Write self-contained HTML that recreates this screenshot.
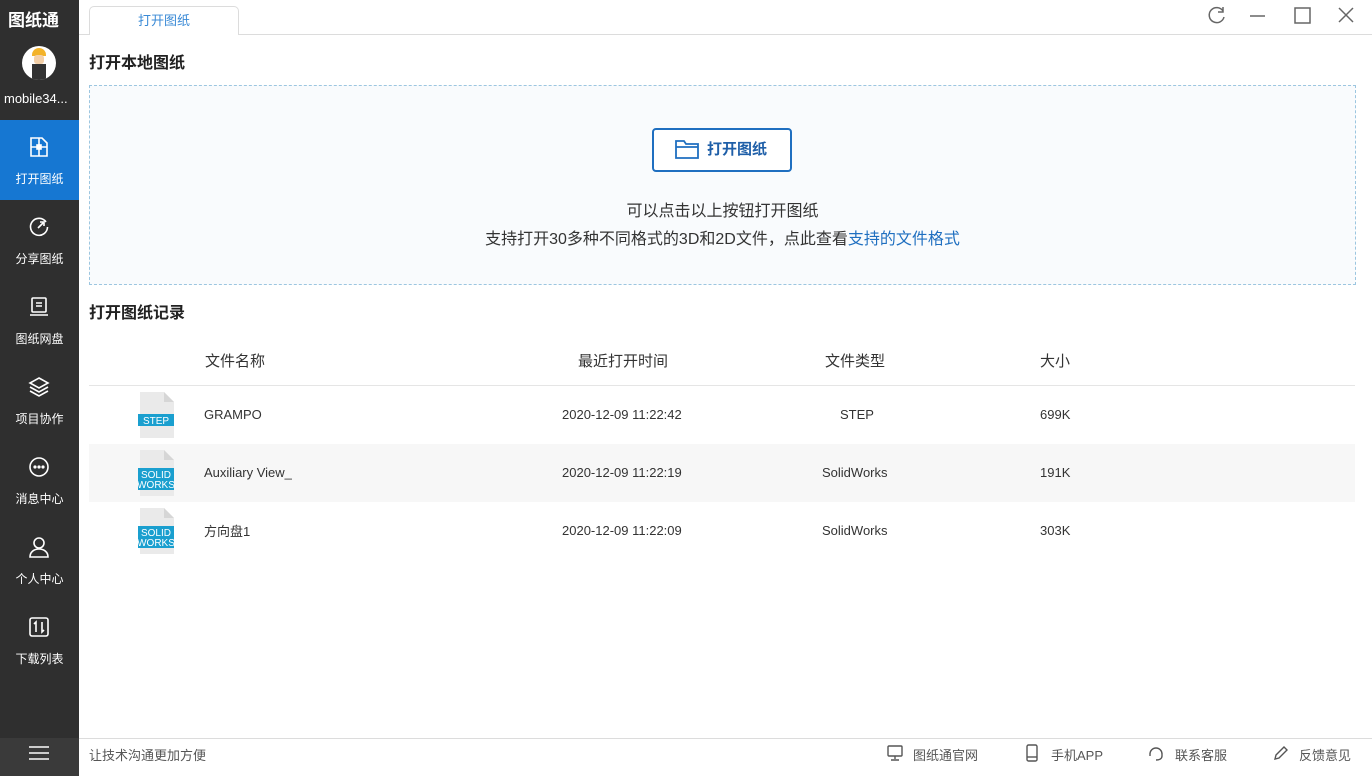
<!DOCTYPE html><html><head><meta charset="utf-8"><style>
*{margin:0;padding:0;box-sizing:border-box}
body{width:1372px;height:776px;overflow:hidden;font-family:"Liberation Sans","Noto Sans CJK SC",sans-serif;background:#fff;position:relative;color:#333}
.side{position:absolute;left:0;top:0;width:79px;height:776px;background:#2f2f2f}
.abs{position:absolute}
.nav{position:absolute;left:0;width:79px;height:80px;color:#fff;font-size:12px;text-align:center}
.nav svg{position:absolute;left:28px;top:16px}
.nav span{position:absolute;left:0;right:0;top:50px}
.row{position:absolute;left:89px;width:1266px;height:58px;font-size:13px;color:#333}
.row div{position:absolute;top:20px}
.fi{position:absolute;left:49px;top:6px;width:37px;height:46px}
.foot{position:absolute;top:745px;font-size:13px;color:#555}
</style></head><body>
<div class="side">
 <div class="abs" style="left:8px;top:6px;color:#fff;font-weight:bold;font-size:17px;letter-spacing:0">图纸通</div>
 <div class="abs" style="left:22px;top:46px;width:34px;height:34px;border-radius:50%;background:#fff;overflow:hidden">
  <div class="abs" style="left:10px;top:2px;width:14px;height:8px;background:#f3b32a;border-radius:7px 7px 0 0"></div>
  <div class="abs" style="left:12px;top:9px;width:10px;height:9px;background:#f4d0a8;border-radius:3px"></div>
  <div class="abs" style="left:10px;top:18px;width:14px;height:16px;background:#333"></div>
 </div>
 <div class="abs" style="left:4px;top:91px;color:#fff;font-size:13px">mobile34...</div>
 <div class="nav" style="top:120px;background:#1677d2">
  <svg width="22" height="22" viewBox="0 0 22 22" fill="none" stroke="#fff" stroke-width="1.6"><path d="M3 2h11l5 5v13H3z M11 2v18 M3 11h16"/><rect x="9" y="9" width="4" height="4" fill="#fff"/></svg><span>打开图纸</span></div>
 <div class="nav" style="top:200px"><svg width="22" height="22" viewBox="0 0 22 22" fill="none" stroke="#fff" stroke-width="1.6"><path d="M18 6A8.5 8.5 0 1 0 19.5 11"/><path d="M10 12l5-5M12 6h4v4"/></svg><span>分享图纸</span></div>
 <div class="nav" style="top:280px"><svg width="22" height="22" viewBox="0 0 22 22" fill="none" stroke="#fff" stroke-width="1.6"><rect x="4" y="2" width="14" height="14" rx="1"/><path d="M8 7h6M8 10h6M2 19h18"/></svg><span>图纸网盘</span></div>
 <div class="nav" style="top:360px"><svg width="22" height="22" viewBox="0 0 22 22" fill="none" stroke="#fff" stroke-width="1.6"><path d="M11 2l9 5-9 5-9-5z M2 11l9 5 9-5 M2 15l9 5 9-5"/></svg><span>项目协作</span></div>
 <div class="nav" style="top:440px"><svg width="22" height="22" viewBox="0 0 22 22" fill="none" stroke="#fff" stroke-width="1.6"><circle cx="11" cy="11" r="9"/><circle cx="7" cy="11" r=".8" fill="#fff"/><circle cx="11" cy="11" r=".8" fill="#fff"/><circle cx="15" cy="11" r=".8" fill="#fff"/></svg><span>消息中心</span></div>
 <div class="nav" style="top:520px"><svg width="22" height="22" viewBox="0 0 22 22" fill="none" stroke="#fff" stroke-width="1.6"><circle cx="11" cy="7" r="5"/><path d="M2 21c0-5 4-8 9-8s9 3 9 8z"/></svg><span>个人中心</span></div>
 <div class="nav" style="top:600px"><svg width="22" height="22" viewBox="0 0 22 22" fill="none" stroke="#fff" stroke-width="1.6"><rect x="2" y="2" width="18" height="18" rx="2"/><path d="M8 16V6L6 8M14 6v10l2-2"/></svg><span>下载列表</span></div>
 <div class="abs" style="left:0;top:738px;width:79px;height:38px;background:#3a3a3a"></div>
 <div class="abs" style="left:29px;top:746px;width:20px;height:2px;background:#ccc;box-shadow:0 6px 0 #ccc,0 12px 0 #ccc"></div>
</div>
<div class="abs" style="left:79px;top:34px;width:1293px;height:1px;background:#dcdcdc"></div>
<div class="abs" style="left:89px;top:6px;width:150px;height:29px;border:1px solid #dcdcdc;border-bottom:none;border-radius:5px 5px 0 0;background:#fff;color:#3a8ad6;font-size:13px;text-align:center;line-height:28px">打开图纸</div>
<svg class="abs" style="left:1200px;top:2px" width="170" height="26" fill="none" stroke="#666" stroke-width="1.5"><path d="M23 9A7.5 7.5 0 1 0 24 15M23 5v5h-5"/><path d="M50 14h15"/><rect x="95" y="6" width="15" height="15"/><path d="M139 6l14 14M153 6l-14 14"/></svg>
<div class="abs" style="left:89px;top:49px;font-size:16px;font-weight:bold;color:#222">打开本地图纸</div>
<div class="abs" style="left:89px;top:85px;width:1267px;height:200px;border:1px dashed #9cc6e0;background:#f9fbfd"></div>
<div class="abs" style="left:652px;top:128px;width:140px;height:44px;border:2px solid #1f6fc0;border-radius:4px;background:#fff;color:#1f5fa8;font-size:15px;font-weight:bold;line-height:40px;padding-left:53px">打开图纸</div>
<svg class="abs" style="left:674px;top:138px" width="26" height="22" fill="none" stroke="#1f6fc0" stroke-width="1.8"><path d="M2 3h8l2 3h12v14H2z M2 9h22"/></svg>
<div class="abs" style="top:197px;left:89px;width:1267px;text-align:center;font-size:16px;color:#333">可以点击以上按钮打开图纸</div>
<div class="abs" style="left:89px;top:225px;width:1267px;text-align:center;font-size:16px;color:#333">支持打开30多种不同格式的3D和2D文件，点此查看<span style="color:#1f6fc0">支持的文件格式</span></div>
<div class="abs" style="left:89px;top:299px;font-size:16px;font-weight:bold;color:#222">打开图纸记录</div>
<div class="abs" style="top:350px;left:205px;font-size:15px;color:#333">文件名称</div>
<div class="abs" style="top:350px;left:578px;font-size:15px;color:#333">最近打开时间</div>
<div class="abs" style="top:350px;left:825px;font-size:15px;color:#333">文件类型</div>
<div class="abs" style="top:350px;left:1040px;font-size:15px;color:#333">大小</div>
<div class="abs" style="left:89px;top:385px;width:1266px;height:1px;background:#e5e5e5"></div>
<div class="row" style="top:386px"><svg class="fi" viewBox="0 0 37 46"><path d="M2 0h24l10 10v36H2z" fill="#eaeaea"/><path d="M26 0v10h10" fill="#d6d6d6"/><rect x="0" y="22" width="36" height="12" fill="#1a9fcf"/><text x="18" y="32" font-size="10" fill="#fff" text-anchor="middle" font-family="Liberation Sans">STEP</text></svg><div style="left:115px;top:21px">GRAMPO</div><div style="left:473px;top:21px">2020-12-09 11:22:42</div><div style="left:751px;top:21px">STEP</div><div style="left:951px;top:21px">699K</div></div>
<div class="row" style="top:444px;background:#f7f7f7"><svg class="fi" viewBox="0 0 37 46"><path d="M2 0h24l10 10v36H2z" fill="#eaeaea"/><path d="M26 0v10h10" fill="#d6d6d6"/><rect x="0" y="18" width="36" height="22" fill="#1a9fcf"/><text x="18" y="28" font-size="10" fill="#fff" text-anchor="middle" font-family="Liberation Sans">SOLID</text><text x="18" y="38" font-size="10" fill="#fff" text-anchor="middle" font-family="Liberation Sans">WORKS</text></svg><div style="left:115px;top:21px">Auxiliary View_</div><div style="left:473px;top:21px">2020-12-09 11:22:19</div><div style="left:733px;top:21px">SolidWorks</div><div style="left:951px;top:21px">191K</div></div>
<div class="row" style="top:502px"><svg class="fi" viewBox="0 0 37 46"><path d="M2 0h24l10 10v36H2z" fill="#eaeaea"/><path d="M26 0v10h10" fill="#d6d6d6"/><rect x="0" y="18" width="36" height="22" fill="#1a9fcf"/><text x="18" y="28" font-size="10" fill="#fff" text-anchor="middle" font-family="Liberation Sans">SOLID</text><text x="18" y="38" font-size="10" fill="#fff" text-anchor="middle" font-family="Liberation Sans">WORKS</text></svg><div style="left:115px;top:19px">方向盘1</div><div style="left:473px;top:21px">2020-12-09 11:22:09</div><div style="left:733px;top:21px">SolidWorks</div><div style="left:951px;top:21px">303K</div></div>
<div class="abs" style="left:79px;top:738px;width:1293px;height:1px;background:#dcdcdc"></div>
<div class="foot" style="left:89px">让技术沟通更加方便</div>
<svg class="abs" style="left:886px;top:744px" width="18" height="18" fill="none" stroke="#555" stroke-width="1.4"><rect x="2" y="2" width="14" height="10" rx="1"/><path d="M9 12v3M5 16h8"/></svg>
<div class="foot" style="left:913px">图纸通官网</div>
<svg class="abs" style="left:1025px;top:744px" width="14" height="18" fill="none" stroke="#555" stroke-width="1.4"><rect x="2" y="1" width="10" height="16" rx="1.5"/><path d="M2 13h10"/></svg>
<div class="foot" style="left:1051px">手机APP</div>
<svg class="abs" style="left:1147px;top:744px" width="18" height="18" fill="none" stroke="#555" stroke-width="1.4"><path d="M3 10a6 6 0 0 1 12 0M3 9v3M15 9v3c0 3-3 4-6 4"/></svg>
<div class="foot" style="left:1175px">联系客服</div>
<svg class="abs" style="left:1272px;top:744px" width="18" height="18" fill="none" stroke="#555" stroke-width="1.4"><path d="M3 15l1-4 8-8 3 3-8 8z"/></svg>
<div class="foot" style="left:1299px">反馈意见</div>
</body></html>
